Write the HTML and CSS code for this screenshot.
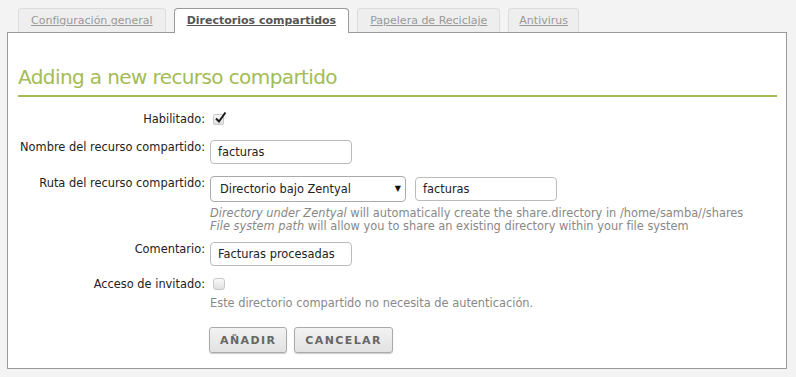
FILE: index.html
```html
<!DOCTYPE html>
<html lang="es">
<head>
<meta charset="UTF-8">
<title>Directorios compartidos</title>
<link rel="stylesheet" href="styles.css">
</head>
<body>

<!-- TABS -->
<div class="tabs">
    <a class="tab" href="#">Configuración general </a>
    <a class="tab active" href="#">Directorios compartidos </a>
    <a class="tab" href="#">Papelera de Reciclaje </a>
    <a class="tab last" href="#">Antivirus</a>
</div>

<!-- FORM PANEL -->
<div class="panel">
    <h3 class="title">Adding a new recurso compartido</h3>

    <div class="row row-check">
        <label class="label">Habilitado:</label>
        <div class="field">
            <span class="check checked">
                <svg class="tick" width="13" height="13" viewBox="0 0 13 13"><path d="M2 7.5 L5 10.5 L11.5 1.5" fill="none" stroke="#1a1a1a" stroke-width="2"/></svg>
            </span>
        </div>
    </div>

    <div class="row">
        <label class="label">Nombre del recurso compartido:</label>
        <div class="field">
            <div class="input">facturas</div>
        </div>
    </div>

    <div class="row row-path">
        <label class="label">Ruta del recurso compartido:</label>
        <div class="field">
            <div class="inline">
                <div class="select">Directorio bajo Zentyal <span class="arrow">▼</span></div>
                <div class="input">facturas</div>
            </div>
            <div class="help">
                <i>Directory under Zentyal</i> will automatically create the share.directory in /home/samba//shares<br>
                <i>File system path</i> will allow you to share an existing directory within your file system
            </div>
        </div>
    </div>

    <div class="row row-comment">
        <label class="label">Comentario:</label>
        <div class="field">
            <div class="input">Facturas procesadas</div>
        </div>
    </div>

    <div class="row row-guest">
        <label class="label">Acceso de invitado:</label>
        <div class="field">
            <span class="check"></span>
            <div class="help">Este directorio compartido no necesita de autenticación.</div>
        </div>
    </div>

    <div class="buttons">
        <button class="btn">AÑADIR</button>
        <button class="btn">CANCELAR</button>
    </div>
</div>

</body>
</html>
```

FILE: styles.css
```css
body {
    background: #f3f3f3;
    margin: 0;
    padding: 8px 9px 0 7px;
    font-family: 'DejaVu Sans', Verdana, sans-serif;
    font-size: 11.4px;
    line-height: 13px;
    color: #222;
}

/* TABS */
.tabs {
    display: flex;
    gap: 8px;
    padding-left: 11px;
    height: 24px;
    position: relative;
    z-index: 1;
}

.tab {
    display: block;
    height: 23px;
    line-height: 24px;
    padding: 0 12px 0 12px;
    background: #eeeeee;
    border: 1px solid #dcdcdc;
    border-bottom: none;
    border-radius: 4px 4px 0 0;
    color: #999;
    font-size: 11px;
}

.tab.last {
    padding: 0 10px;
}

.tab.active {
    background: #fff;
    border-color: #999;
    height: 24px;
    color: #555;
    font-weight: bold;
}

/* PANEL */
.panel {
    box-sizing: border-box;
    background: #fff;
    border: 1px solid #999;
    padding: 33px 9px 0 10px;
    height: 337px;
}

.title {
    margin: 0 0 15px 0;
    padding-bottom: 6px;
    border-bottom: 2px solid #a3bc56;
    color: #a3bc56;
    font-weight: normal;
    font-size: 20px;
    line-height: 23px;
    letter-spacing: -0.6px;
}

.row {
    display: grid;
    grid-template-columns: 187px 1fr;
    column-gap: 5px;
    margin-bottom: 12px;
}

.row-check {
    margin-bottom: 14px;
}

.row-path {
    margin-bottom: 9px;
}

.row-comment {
    margin-bottom: 11px;
}

.label {
    text-align: right;
    padding-top: 1px;
    white-space: nowrap;
}

.field {
    display: flex;
    flex-direction: column;
    align-items: flex-start;
}

.inline {
    display: flex;
    gap: 9px;
}

.input {
    width: 126px;
    height: 22px;
    line-height: 22px;
    padding: 0 7px;
    border: 1px solid #bbb;
    border-radius: 4px;
    background: #fff;
}

.inline .input {
    margin-top: 1px;
}

.select {
    width: 185px;
    height: 24px;
    line-height: 24px;
    padding: 0 0 0 9px;
    border: 1px solid #aaa;
    border-radius: 4px;
    background: #fff;
    position: relative;
}

.select .arrow {
    position: absolute;
    right: 4px;
    top: 0;
    font-size: 8px;
    color: #111;
}

.help {
    color: #888;
    margin-top: 5px;
}

.row-guest .help {
    margin-top: 7px;
}

.check {
    display: block;
    width: 9px;
    height: 9px;
    margin-top: 2px;
    margin-left: 3px;
    border: 1px solid #c8c8c8;
    border-radius: 2px;
    background: linear-gradient(#fafafa, #e0e0e0);
    position: relative;
}

.row-guest .check {
    width: 10px;
    height: 10px;
    margin-top: 1px;
    border-radius: 3px;
}

.tick {
    position: absolute;
    left: 0;
    top: -4px;
}

.buttons {
    display: flex;
    gap: 7px;
    margin-left: 191px;
    margin-top: 17px;
}

.btn {
    height: 26px;
    padding: 0 10px;
    border: 1px solid #aaa;
    border-radius: 3px;
    background: linear-gradient(#f2f2f2, #e2e2e2);
    box-shadow: 0 1px 1px rgba(0, 0, 0, 0.2);
    color: #666;
    font-family: 'DejaVu Sans', sans-serif;
    font-weight: bold;
    font-size: 11px;
    letter-spacing: 1.4px;
}
```
